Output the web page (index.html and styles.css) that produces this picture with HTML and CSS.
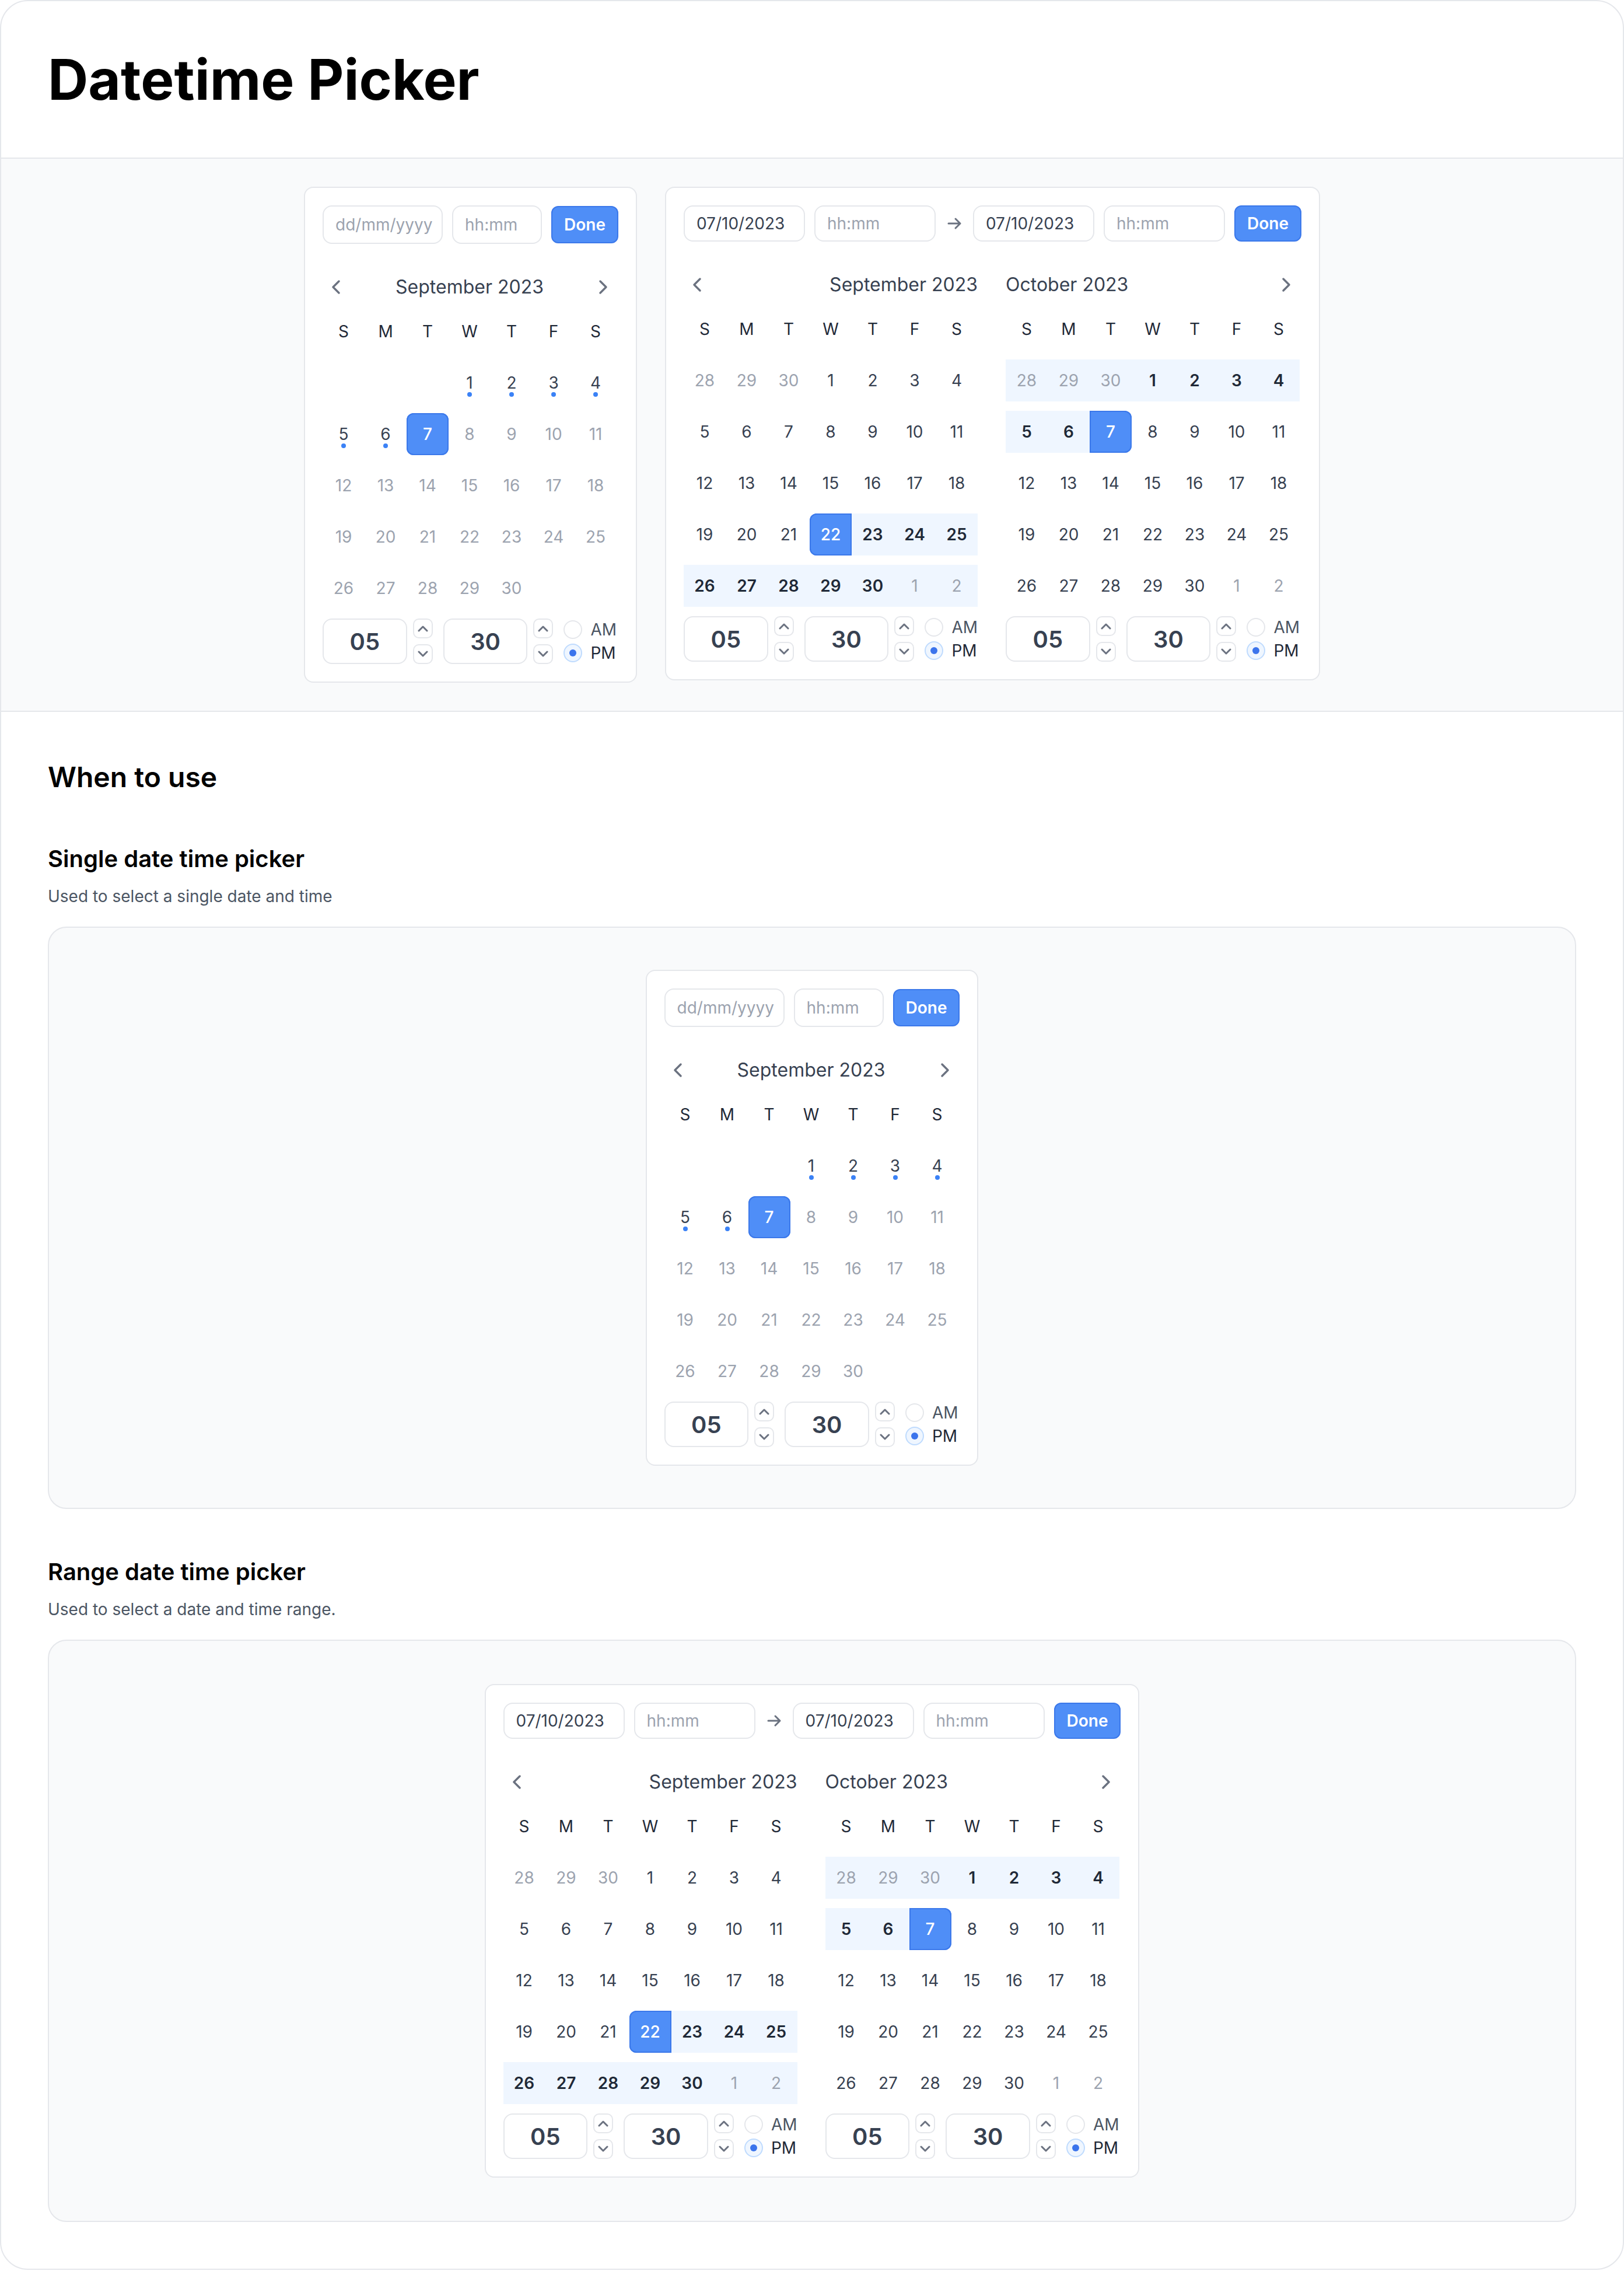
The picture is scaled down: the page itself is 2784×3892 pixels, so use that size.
FILE: index.html
```html
<!DOCTYPE html>
<html lang="en">
<head>
<meta charset="utf-8">
<title>Datetime Picker</title>
<link rel="stylesheet" href="styles.css">
</head>
<body>
<div class="frame">
  <header class="header">
    <h1 class="title">Datetime Picker</h1>
  </header>

  <section class="showcase">
    <!-- single picker -->
    <div class="card">
      <div class="inputs">
        <input class="field w-date" placeholder="dd/mm/yyyy">
        <input class="field w-time" placeholder="hh:mm">
        <button class="done">Done</button>
      </div>
      <div class="cal">
        <div class="nav center">
          <span class="navbtn"><svg width="16" height="16" viewBox="0 0 16 16"><path d="M10 3 L5 8 L10 13" /></svg></span>
          <span class="month">September 2023</span>
          <span class="navbtn"><svg width="16" height="16" viewBox="0 0 16 16"><path d="M6 3 L11 8 L6 13" /></svg></span>
        </div>
        <div class="grid">
          <span class="wd">S</span><span class="wd">M</span><span class="wd">T</span><span class="wd">W</span><span class="wd">T</span><span class="wd">F</span><span class="wd">S</span>
          <span class="d"></span><span class="d"></span><span class="d"></span><span class="d dot">1</span><span class="d dot">2</span><span class="d dot">3</span><span class="d dot">4</span>
          <span class="d dot">5</span><span class="d dot">6</span><span class="d sel">7</span><span class="d m">8</span><span class="d m">9</span><span class="d m">10</span><span class="d m">11</span>
          <span class="d m">12</span><span class="d m">13</span><span class="d m">14</span><span class="d m">15</span><span class="d m">16</span><span class="d m">17</span><span class="d m">18</span>
          <span class="d m">19</span><span class="d m">20</span><span class="d m">21</span><span class="d m">22</span><span class="d m">23</span><span class="d m">24</span><span class="d m">25</span>
          <span class="d m">26</span><span class="d m">27</span><span class="d m">28</span><span class="d m">29</span><span class="d m">30</span><span class="d"></span><span class="d"></span>
        </div>
        <div class="time">
          <div class="tbox">05</div>
          <div class="spin">
            <span class="sb"><svg width="10" height="6" viewBox="0 0 10 6"><path d="M1.5 5 L5 1.5 L8.5 5"/></svg></span>
            <span class="sb"><svg width="10" height="6" viewBox="0 0 10 6"><path d="M1.5 1 L5 4.5 L8.5 1"/></svg></span>
          </div>
          <div class="tbox">30</div>
          <div class="spin">
            <span class="sb"><svg width="10" height="6" viewBox="0 0 10 6"><path d="M1.5 5 L5 1.5 L8.5 5"/></svg></span>
            <span class="sb"><svg width="10" height="6" viewBox="0 0 10 6"><path d="M1.5 1 L5 4.5 L8.5 1"/></svg></span>
          </div>
          <div class="ampm">
            <div class="opt"><span class="radio"></span><span class="lbl">AM</span></div>
            <div class="opt on"><span class="radio"></span><span class="lbl">PM</span></div>
          </div>
        </div>
      </div>
    </div>

    <!-- range picker -->
    <div class="card">
      <div class="inputs short">
        <input class="field w-r" value="07/10/2023">
        <input class="field w-r" placeholder="hh:mm">
        <span class="arrow"><svg width="16" height="16" viewBox="0 0 16 16"><path d="M3 8 H13 M9 4 L13 8 L9 12"/></svg></span>
        <input class="field w-r" value="07/10/2023">
        <input class="field w-r" placeholder="hh:mm">
        <button class="done">Done</button>
      </div>
      <div class="cals">
        <div class="cal">
          <div class="nav">
            <span class="navbtn"><svg width="16" height="16" viewBox="0 0 16 16"><path d="M10 3 L5 8 L10 13" /></svg></span>
            <span class="month">September 2023</span>
          </div>
          <div class="grid">
            <span class="wd">S</span><span class="wd">M</span><span class="wd">T</span><span class="wd">W</span><span class="wd">T</span><span class="wd">F</span><span class="wd">S</span>
            <span class="d m">28</span><span class="d m">29</span><span class="d m">30</span><span class="d">1</span><span class="d">2</span><span class="d">3</span><span class="d">4</span>
            <span class="d">5</span><span class="d">6</span><span class="d">7</span><span class="d">8</span><span class="d">9</span><span class="d">10</span><span class="d">11</span>
            <span class="d">12</span><span class="d">13</span><span class="d">14</span><span class="d">15</span><span class="d">16</span><span class="d">17</span><span class="d">18</span>
            <span class="d">19</span><span class="d">20</span><span class="d">21</span><span class="d sel start">22</span><span class="d in">23</span><span class="d in">24</span><span class="d in">25</span>
            <span class="d in">26</span><span class="d in">27</span><span class="d in">28</span><span class="d in">29</span><span class="d in">30</span><span class="d in m">1</span><span class="d in m">2</span>
          </div>
          <div class="time">
            <div class="tbox">05</div>
            <div class="spin">
              <span class="sb"><svg width="10" height="6" viewBox="0 0 10 6"><path d="M1.5 5 L5 1.5 L8.5 5"/></svg></span>
              <span class="sb"><svg width="10" height="6" viewBox="0 0 10 6"><path d="M1.5 1 L5 4.5 L8.5 1"/></svg></span>
            </div>
            <div class="tbox">30</div>
            <div class="spin">
              <span class="sb"><svg width="10" height="6" viewBox="0 0 10 6"><path d="M1.5 5 L5 1.5 L8.5 5"/></svg></span>
              <span class="sb"><svg width="10" height="6" viewBox="0 0 10 6"><path d="M1.5 1 L5 4.5 L8.5 1"/></svg></span>
            </div>
            <div class="ampm">
              <div class="opt"><span class="radio"></span><span class="lbl">AM</span></div>
              <div class="opt on"><span class="radio"></span><span class="lbl">PM</span></div>
            </div>
          </div>
        </div>
        <div class="cal">
          <div class="nav">
            <span class="month">October 2023</span>
            <span class="navbtn"><svg width="16" height="16" viewBox="0 0 16 16"><path d="M6 3 L11 8 L6 13" /></svg></span>
          </div>
          <div class="grid">
            <span class="wd">S</span><span class="wd">M</span><span class="wd">T</span><span class="wd">W</span><span class="wd">T</span><span class="wd">F</span><span class="wd">S</span>
            <span class="d in m">28</span><span class="d in m">29</span><span class="d in m">30</span><span class="d in">1</span><span class="d in">2</span><span class="d in">3</span><span class="d in">4</span>
            <span class="d in">5</span><span class="d in">6</span><span class="d sel end">7</span><span class="d">8</span><span class="d">9</span><span class="d">10</span><span class="d">11</span>
            <span class="d">12</span><span class="d">13</span><span class="d">14</span><span class="d">15</span><span class="d">16</span><span class="d">17</span><span class="d">18</span>
            <span class="d">19</span><span class="d">20</span><span class="d">21</span><span class="d">22</span><span class="d">23</span><span class="d">24</span><span class="d">25</span>
            <span class="d">26</span><span class="d">27</span><span class="d">28</span><span class="d">29</span><span class="d">30</span><span class="d m">1</span><span class="d m">2</span>
          </div>
          <div class="time">
            <div class="tbox">05</div>
            <div class="spin">
              <span class="sb"><svg width="10" height="6" viewBox="0 0 10 6"><path d="M1.5 5 L5 1.5 L8.5 5"/></svg></span>
              <span class="sb"><svg width="10" height="6" viewBox="0 0 10 6"><path d="M1.5 1 L5 4.5 L8.5 1"/></svg></span>
            </div>
            <div class="tbox">30</div>
            <div class="spin">
              <span class="sb"><svg width="10" height="6" viewBox="0 0 10 6"><path d="M1.5 5 L5 1.5 L8.5 5"/></svg></span>
              <span class="sb"><svg width="10" height="6" viewBox="0 0 10 6"><path d="M1.5 1 L5 4.5 L8.5 1"/></svg></span>
            </div>
            <div class="ampm">
              <div class="opt"><span class="radio"></span><span class="lbl">AM</span></div>
              <div class="opt on"><span class="radio"></span><span class="lbl">PM</span></div>
            </div>
          </div>
        </div>
      </div>
    </div>
  </section>

  <main class="content">
    <h2 class="h2">When to use</h2>

    <h3 class="h3">Single date time picker</h3>
    <p class="desc">Used to select a single date and time</p>
    <div class="demo">
      <div class="card">
        <div class="inputs">
          <input class="field w-date" placeholder="dd/mm/yyyy">
          <input class="field w-time" placeholder="hh:mm">
          <button class="done">Done</button>
        </div>
        <div class="cal">
          <div class="nav center">
            <span class="navbtn"><svg width="16" height="16" viewBox="0 0 16 16"><path d="M10 3 L5 8 L10 13" /></svg></span>
            <span class="month">September 2023</span>
            <span class="navbtn"><svg width="16" height="16" viewBox="0 0 16 16"><path d="M6 3 L11 8 L6 13" /></svg></span>
          </div>
          <div class="grid">
            <span class="wd">S</span><span class="wd">M</span><span class="wd">T</span><span class="wd">W</span><span class="wd">T</span><span class="wd">F</span><span class="wd">S</span>
            <span class="d"></span><span class="d"></span><span class="d"></span><span class="d dot">1</span><span class="d dot">2</span><span class="d dot">3</span><span class="d dot">4</span>
            <span class="d dot">5</span><span class="d dot">6</span><span class="d sel">7</span><span class="d m">8</span><span class="d m">9</span><span class="d m">10</span><span class="d m">11</span>
            <span class="d m">12</span><span class="d m">13</span><span class="d m">14</span><span class="d m">15</span><span class="d m">16</span><span class="d m">17</span><span class="d m">18</span>
            <span class="d m">19</span><span class="d m">20</span><span class="d m">21</span><span class="d m">22</span><span class="d m">23</span><span class="d m">24</span><span class="d m">25</span>
            <span class="d m">26</span><span class="d m">27</span><span class="d m">28</span><span class="d m">29</span><span class="d m">30</span><span class="d"></span><span class="d"></span>
          </div>
          <div class="time">
            <div class="tbox">05</div>
            <div class="spin">
              <span class="sb"><svg width="10" height="6" viewBox="0 0 10 6"><path d="M1.5 5 L5 1.5 L8.5 5"/></svg></span>
              <span class="sb"><svg width="10" height="6" viewBox="0 0 10 6"><path d="M1.5 1 L5 4.5 L8.5 1"/></svg></span>
            </div>
            <div class="tbox">30</div>
            <div class="spin">
              <span class="sb"><svg width="10" height="6" viewBox="0 0 10 6"><path d="M1.5 5 L5 1.5 L8.5 5"/></svg></span>
              <span class="sb"><svg width="10" height="6" viewBox="0 0 10 6"><path d="M1.5 1 L5 4.5 L8.5 1"/></svg></span>
            </div>
            <div class="ampm">
              <div class="opt"><span class="radio"></span><span class="lbl">AM</span></div>
              <div class="opt on"><span class="radio"></span><span class="lbl">PM</span></div>
            </div>
          </div>
        </div>
      </div>
    </div>

    <h3 class="h3 spaced">Range date time picker</h3>
    <p class="desc">Used to select a date and time range.</p>
    <div class="demo">
      <div class="card">
        <div class="inputs short">
          <input class="field w-r" value="07/10/2023">
          <input class="field w-r" placeholder="hh:mm">
          <span class="arrow"><svg width="16" height="16" viewBox="0 0 16 16"><path d="M3 8 H13 M9 4 L13 8 L9 12"/></svg></span>
          <input class="field w-r" value="07/10/2023">
          <input class="field w-r" placeholder="hh:mm">
          <button class="done">Done</button>
        </div>
        <div class="cals">
          <div class="cal">
            <div class="nav">
              <span class="navbtn"><svg width="16" height="16" viewBox="0 0 16 16"><path d="M10 3 L5 8 L10 13" /></svg></span>
              <span class="month">September 2023</span>
            </div>
            <div class="grid">
              <span class="wd">S</span><span class="wd">M</span><span class="wd">T</span><span class="wd">W</span><span class="wd">T</span><span class="wd">F</span><span class="wd">S</span>
              <span class="d m">28</span><span class="d m">29</span><span class="d m">30</span><span class="d">1</span><span class="d">2</span><span class="d">3</span><span class="d">4</span>
              <span class="d">5</span><span class="d">6</span><span class="d">7</span><span class="d">8</span><span class="d">9</span><span class="d">10</span><span class="d">11</span>
              <span class="d">12</span><span class="d">13</span><span class="d">14</span><span class="d">15</span><span class="d">16</span><span class="d">17</span><span class="d">18</span>
              <span class="d">19</span><span class="d">20</span><span class="d">21</span><span class="d sel start">22</span><span class="d in">23</span><span class="d in">24</span><span class="d in">25</span>
              <span class="d in">26</span><span class="d in">27</span><span class="d in">28</span><span class="d in">29</span><span class="d in">30</span><span class="d in m">1</span><span class="d in m">2</span>
            </div>
            <div class="time">
              <div class="tbox">05</div>
              <div class="spin">
                <span class="sb"><svg width="10" height="6" viewBox="0 0 10 6"><path d="M1.5 5 L5 1.5 L8.5 5"/></svg></span>
                <span class="sb"><svg width="10" height="6" viewBox="0 0 10 6"><path d="M1.5 1 L5 4.5 L8.5 1"/></svg></span>
              </div>
              <div class="tbox">30</div>
              <div class="spin">
                <span class="sb"><svg width="10" height="6" viewBox="0 0 10 6"><path d="M1.5 5 L5 1.5 L8.5 5"/></svg></span>
                <span class="sb"><svg width="10" height="6" viewBox="0 0 10 6"><path d="M1.5 1 L5 4.5 L8.5 1"/></svg></span>
              </div>
              <div class="ampm">
                <div class="opt"><span class="radio"></span><span class="lbl">AM</span></div>
                <div class="opt on"><span class="radio"></span><span class="lbl">PM</span></div>
              </div>
            </div>
          </div>
          <div class="cal">
            <div class="nav">
              <span class="month">October 2023</span>
              <span class="navbtn"><svg width="16" height="16" viewBox="0 0 16 16"><path d="M6 3 L11 8 L6 13" /></svg></span>
            </div>
            <div class="grid">
              <span class="wd">S</span><span class="wd">M</span><span class="wd">T</span><span class="wd">W</span><span class="wd">T</span><span class="wd">F</span><span class="wd">S</span>
              <span class="d in m">28</span><span class="d in m">29</span><span class="d in m">30</span><span class="d in">1</span><span class="d in">2</span><span class="d in">3</span><span class="d in">4</span>
              <span class="d in">5</span><span class="d in">6</span><span class="d sel end">7</span><span class="d">8</span><span class="d">9</span><span class="d">10</span><span class="d">11</span>
              <span class="d">12</span><span class="d">13</span><span class="d">14</span><span class="d">15</span><span class="d">16</span><span class="d">17</span><span class="d">18</span>
              <span class="d">19</span><span class="d">20</span><span class="d">21</span><span class="d">22</span><span class="d">23</span><span class="d">24</span><span class="d">25</span>
              <span class="d">26</span><span class="d">27</span><span class="d">28</span><span class="d">29</span><span class="d">30</span><span class="d m">1</span><span class="d m">2</span>
            </div>
            <div class="time">
              <div class="tbox">05</div>
              <div class="spin">
                <span class="sb"><svg width="10" height="6" viewBox="0 0 10 6"><path d="M1.5 5 L5 1.5 L8.5 5"/></svg></span>
                <span class="sb"><svg width="10" height="6" viewBox="0 0 10 6"><path d="M1.5 1 L5 4.5 L8.5 1"/></svg></span>
              </div>
              <div class="tbox">30</div>
              <div class="spin">
                <span class="sb"><svg width="10" height="6" viewBox="0 0 10 6"><path d="M1.5 5 L5 1.5 L8.5 5"/></svg></span>
                <span class="sb"><svg width="10" height="6" viewBox="0 0 10 6"><path d="M1.5 1 L5 4.5 L8.5 1"/></svg></span>
              </div>
              <div class="ampm">
                <div class="opt"><span class="radio"></span><span class="lbl">AM</span></div>
                <div class="opt on"><span class="radio"></span><span class="lbl">PM</span></div>
              </div>
            </div>
          </div>
        </div>
      </div>
    </div>
  </main>
</div>
</body>
</html>
```
FILE: styles.css
```css
* { box-sizing: border-box; }
html { zoom: 2; }
body {
  margin: 0;
  font-family: Inter, "Noto Sans", "Liberation Sans", sans-serif;
  color: #111827;
  background: #ffffff;
}
.frame {
  width: 1392px;
  border: 1px solid #e5e7eb;
  border-radius: 24px;
  overflow: hidden;
  background: #ffffff;
}
.header {
  padding: 43px 40px;
  border-bottom: 1px solid #e5e7eb;
}
.title {
  margin: 0;
  font-size: 48px;
  line-height: 48px;
  font-weight: 700;
  color: #000000;
}
.showcase {
  background: #f9fafb;
  border-bottom: 1px solid #e5e7eb;
  padding: 24px 0;
  display: flex;
  justify-content: center;
  align-items: flex-start;
  gap: 24px;
}
.content { padding: 40px 40px 40px; }
.h2 {
  margin: 0 0 40px;
  font-size: 24px;
  line-height: 32px;
  font-weight: 600;
  color: #000000;
}
.h3 {
  margin: 0 0 8px;
  font-size: 20px;
  line-height: 28px;
  font-weight: 600;
  color: #000000;
}
.h3.spaced { margin-top: 40px; }
.desc {
  margin: 0 0 16px;
  font-size: 14px;
  line-height: 20px;
  color: #4b5563;
}
.demo {
  height: 499px;
  border: 1px solid #e5e7eb;
  border-radius: 16px;
  background: #f9fafb;
  display: flex;
  align-items: center;
  justify-content: center;
}

/* card */
.card {
  background: #ffffff;
  border: 1px solid #e5e7eb;
  border-radius: 8px;
  padding: 15px;
}
.inputs {
  display: flex;
  align-items: center;
  gap: 8px;
  height: 33px;
  margin-bottom: 17px;
}
.inputs.short { height: 31px; }
.field {
  height: 33px;
  border: 1px solid #e5e7eb;
  border-radius: 8px;
  padding: 0 4px 0 10px;
  font-family: inherit;
  font-size: 14px;
  color: #374151;
  background: #ffffff;
  outline: none;
  margin: 0;
}
.inputs.short .field { height: 31px; }
.field::placeholder { color: #9ca3af; }
.w-date { width: 103px; }
.w-time { width: 77px; }
.w-r { width: 104px; }
.done {
  height: 32px;
  padding: 0 10px;
  border: 1px solid #3b78ea;
  border-radius: 6px;
  background: #4f8ef7;
  color: #ffffff;
  font-family: inherit;
  font-size: 14px;
  font-weight: 600;
  margin: 0;
}
.inputs.short .done { height: 31px; }
.arrow {
  width: 16px;
  height: 16px;
  display: flex;
}
.arrow path {
  fill: none;
  stroke: #6b7280;
  stroke-width: 1.5;
  stroke-linecap: round;
  stroke-linejoin: round;
}

/* calendar */
.cals { display: flex; gap: 24px; }
.cal { width: 252px; }
.nav {
  height: 40px;
  display: flex;
  align-items: center;
  justify-content: space-between;
}
.navbtn {
  width: 24px;
  height: 24px;
  display: flex;
  align-items: center;
  justify-content: center;
}
.navbtn path {
  fill: none;
  stroke: #6b7280;
  stroke-width: 1.75;
  stroke-linecap: round;
  stroke-linejoin: round;
}
.month {
  font-size: 16px;
  line-height: 24px;
  font-weight: 400;
  color: #374151;
}
.grid {
  display: grid;
  grid-template-columns: repeat(7, 36px);
  grid-auto-rows: 36px;
  row-gap: 8px;
}
.wd, .d {
  display: flex;
  align-items: center;
  justify-content: center;
  font-size: 14px;
  line-height: 20px;
}
.wd { color: #1f2937; }
.d { color: #374151; position: relative; }
.d.m { color: #9ca3af; }
.d.dot::after {
  content: "";
  position: absolute;
  left: 16px;
  top: 26px;
  width: 4px;
  height: 4px;
  border-radius: 50%;
  background: #3b82f6;
}
.d.in { background: #eff6ff; font-weight: 600; color: #1f2937; }
.d.in.m { font-weight: 400; color: #9ca3af; }
.d.sel {
  background: #4f8ef7;
  box-shadow: inset 0 0 0 1px #3b78ea;
  color: #ffffff;
  font-weight: 500;
  border-radius: 6px;
}
.d.sel.start { border-radius: 6px 0 0 6px; }
.d.sel.end { border-radius: 0 6px 6px 0; }

/* time */
.time {
  margin-top: 8px;
  height: 39px;
  display: flex;
  align-items: center;
}
.tbox {
  width: 73px;
  height: 39px;
  border: 1px solid #e5e7eb;
  border-radius: 8px;
  display: flex;
  align-items: center;
  justify-content: center;
  font-size: 20px;
  font-weight: 600;
  color: #374151;
}
.spin {
  margin-left: 5px;
  margin-right: 9px;
  display: flex;
  flex-direction: column;
  gap: 5px;
}
.sb {
  width: 17px;
  height: 17px;
  border: 1px solid #e5e7eb;
  border-radius: 5px;
  display: flex;
  align-items: center;
  justify-content: center;
}
.sb path {
  fill: none;
  stroke: #6b7280;
  stroke-width: 1.5;
  stroke-linecap: round;
  stroke-linejoin: round;
}
.ampm {
  display: flex;
  flex-direction: column;
  gap: 4px;
}
.opt {
  display: flex;
  align-items: center;
  gap: 7px;
  height: 16px;
}
.radio {
  width: 16px;
  height: 16px;
  border-radius: 50%;
  border: 1px solid #e5e7eb;
  background: #ffffff;
  display: flex;
  align-items: center;
  justify-content: center;
}
.opt.on .radio {
  border-color: #bfdbfe;
  background: #eff6ff;
}
.opt.on .radio::after {
  content: "";
  width: 6px;
  height: 6px;
  border-radius: 50%;
  background: #3b74ec;
}
.lbl {
  font-size: 14px;
  line-height: 16px;
  color: #4b5563;
}
.opt.on .lbl { color: #1f2937; }
```
